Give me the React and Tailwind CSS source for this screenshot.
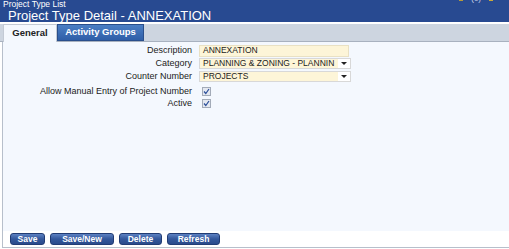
export default function App() {
  const rows = [
    { label: "Description", kind: "text", value: "ANNEXATION" },
    { label: "Category", kind: "select", value: "PLANNING & ZONING - PLANNIN" },
    { label: "Counter Number", kind: "select", value: "PROJECTS" },
  ];

  return (
    <div className="w-[509px] h-[249px] bg-white overflow-hidden flex flex-col font-['Liberation_Sans',Arial,sans-serif]">
      {/* header */}
      <div className="relative h-[22px] bg-[#284a91] text-white shrink-0">
        <div className="pl-[3px] text-[8.5px] leading-[9px]">Project Type List</div>
        <div className="pl-[8px] text-[13px] leading-[13px]">Project Type Detail - ANNEXATION</div>
        <div className="absolute right-[16px] -top-[5px] flex items-center gap-[8px] text-[8px] leading-[8px] text-[#c8d4ea]">
          <span className="w-[4px] h-[4px] bg-[#b59a3a]"></span>
          <span>(0)</span>
          <span className="w-[4px] h-[4px] bg-[#c9a93a]"></span>
        </div>
      </div>
      <div className="h-[2px] bg-white shrink-0"></div>

      {/* tabs */}
      <div className="h-[18px] bg-[#cdd5e0] border-b border-[#a8b1bf] flex items-end pl-[3px] shrink-0">
        <div className="h-[18px] -mb-[1px] w-[54px] bg-[#f4f8fe] border-t border-l border-r border-[#c3cad5] flex items-center justify-center text-[9.5px] font-bold text-[#222]">
          General
        </div>
        <div className="h-[17px] w-[87px] bg-gradient-to-b from-[#4b7ec4] to-[#2f5fa8] border border-[#2a4f8c] flex items-center justify-center text-[9.5px] font-bold text-white">
          Activity Groups
        </div>
      </div>

      {/* body */}
      <div className="flex-1 ml-[2px] border-l border-b border-[#b7bfcb] flex flex-col min-h-0">
        <div className="flex-1 bg-[#f4f8fe] pt-[2px]">
          {rows.map((r) => (
            <div key={r.label} className="flex items-center h-[13px]">
              <div className="w-[196px] text-right pr-[7px] text-[9px] text-[#222] leading-none">{r.label}</div>
              {r.kind === "text" ? (
                <div className="w-[150px] h-[12px] bg-[#fdf5d8] border border-[#e9e1c4] flex items-center pl-[3px] text-[8.5px] text-[#222] leading-none">
                  {r.value}
                </div>
              ) : (
                <div className="w-[152px] h-[11px] bg-white border border-[#d8d8d8] flex items-stretch">
                  <div className="flex-1 bg-[#fdf5d8] flex items-center pl-[3px] text-[8.5px] text-[#222] leading-none whitespace-nowrap overflow-hidden">
                    {r.value}
                  </div>
                  <div className="w-[12px] flex items-center justify-center">
                    <svg width="6" height="4" viewBox="0 0 6 4"><path d="M0 0h6L3 3z" fill="#222" /></svg>
                  </div>
                </div>
              )}
            </div>
          ))}
          <div className="h-[2px]"></div>
          {["Allow Manual Entry of Project Number", "Active"].map((l) => (
            <div key={l} className="flex items-center h-[12px]">
              <div className="w-[196px] text-right pr-[7px] text-[9px] text-[#222] leading-none whitespace-nowrap">{l}</div>
              <div className="ml-[3px] w-[9px] h-[9px] bg-[#e4e8f0] border border-[#a3abb8] flex items-center justify-center">
                <svg width="7" height="7" viewBox="0 0 7 7"><path d="M1 3.5l1.8 2L6 1" stroke="#2c4f9a" strokeWidth="1.2" fill="none" /></svg>
              </div>
            </div>
          ))}
        </div>
        <div className="h-[16px] bg-white flex items-center pl-[7px] gap-[5px]">
          {[
            ["Save", "w-[35px]"],
            ["Save/New", "w-[64px]"],
            ["Delete", "w-[43px]"],
            ["Refresh", "w-[53px]"],
          ].map(([t, w]) => (
            <div
              key={t}
              className={`${w} h-[12px] rounded-[3px] bg-gradient-to-b from-[#5d82c2] via-[#34589c] to-[#2a4a8a] border border-[#213c74] flex items-center justify-center text-[8.5px] font-bold text-white leading-none`}
            >
              {t}
            </div>
          ))}
        </div>
      </div>
      <div className="h-[1px] shrink-0"></div>
    </div>
  );
}
